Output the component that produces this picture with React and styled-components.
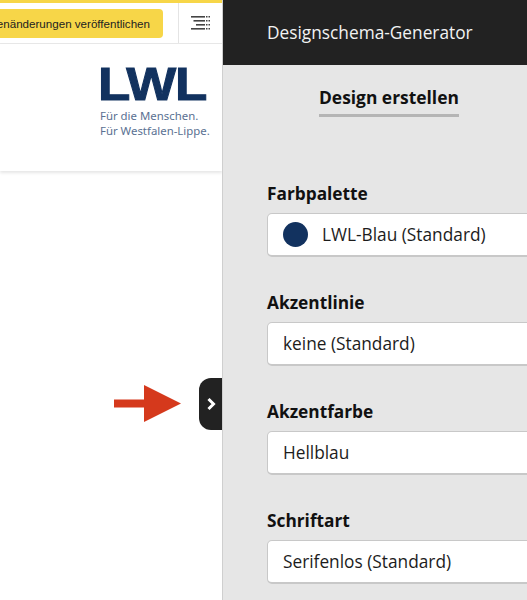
import React from "react"
import styled, { createGlobalStyle } from "styled-components"

const GlobalStyle = createGlobalStyle`
  html, body {
    margin: 0;
    padding: 0;
    background: #fff;
    overflow: hidden;
  }
`

const Page = styled.div`
  position: relative;
  display: flex;
  width: 527px;
  height: 600px;
  overflow: hidden;
  font-family: "Open Sans", sans-serif;
`

const Site = styled.div`
  flex: 0 0 222px;
  width: 222px;
  overflow: hidden;
  background: #fff;
`

const AdminStripe = styled.div`
  height: 3px;
  background: #f7d648;
`

const Toolbar = styled.div`
  display: flex;
  justify-content: flex-end;
  height: 40px;
  border-bottom: 1px solid #e8e8e8;
`

const PublishSlot = styled.div`
  display: flex;
  justify-content: flex-end;
  align-items: center;
  flex: 1;
  min-width: 0;
  padding-right: 15px;
`

const PublishButton = styled.button`
  flex: none;
  height: 29px;
  margin-top: 1px;
  padding: 0 13px;
  border: 0;
  border-radius: 4px;
  background: #f7d648;
  color: #222;
  font: 11.6px "Liberation Sans", sans-serif;
  white-space: nowrap;
`

const MenuCell = styled.div`
  display: flex;
  align-items: center;
  justify-content: center;
  width: 43px;
  border-left: 1px solid #e4e4e4;
`

const SiteHeader = styled.header`
  display: flex;
  justify-content: flex-end;
  height: 127px;
  padding-right: 13px;
  box-shadow: 0 2px 3px rgba(0, 0, 0, 0.1);
`

const Logo = styled.div`
  width: 109px;
  padding-top: 23px;
`

const LogoMark = styled.div`
  height: 34px;
  margin-left: -2px;
  color: #12325f;
  font: 700 46px/34px "Liberation Sans", sans-serif;
  letter-spacing: -1px;
  -webkit-text-stroke: 1px #12325f;
  transform: scaleX(1.15);
  transform-origin: left center;
`

const LogoClaim = styled.div`
  margin-top: 8px;
  color: #5a7192;
  font: 400 11.4px/14.5px "Noto Sans", sans-serif;
  white-space: nowrap;
`

const Panel = styled.aside`
  flex: none;
  width: 420px;
  box-sizing: border-box;
  border-left: 1px solid #cfcfcf;
  background: #e6e6e6;
`

const PanelHeader = styled.div`
  height: 65px;
  padding-left: 44px;
  background: #222;
  color: #f2f2f2;
  font-size: 17.3px;
  line-height: 66px;
`

const Tabs = styled.div`
  display: flex;
  padding: 19px 0 0 96px;
`

const Tab = styled.div`
  padding-bottom: 3px;
  border-bottom: 3px solid #b5b5b5;
  color: #111;
  font-size: 17.4px;
  font-weight: 700;
  line-height: 27px;
`

const Form = styled.div`
  display: flex;
  flex-direction: column;
  gap: 33px;
  padding: 64px 0 0 44px;
`

const Field = styled.div`
  display: flex;
  flex-direction: column;
  gap: 7px;
`

const Label = styled.label`
  color: #111;
  font-size: 17.3px;
  font-weight: 700;
  line-height: 25px;
`

const Select = styled.div`
  display: flex;
  align-items: center;
  gap: 14px;
  box-sizing: border-box;
  width: 340px;
  height: 44px;
  padding-left: 15px;
  border: 1px solid #c8c8c8;
  border-bottom-width: 2px;
  border-radius: 5px;
  background: #fff;
  color: #1c1c1c;
  font-size: 17.3px;
`

const Swatch = styled.span`
  flex: none;
  width: 25px;
  height: 25px;
  border-radius: 50%;
  background: ${props => props.color};
`

const Collapse = styled.button`
  position: absolute;
  top: 378px;
  left: 199px;
  display: flex;
  align-items: center;
  justify-content: center;
  width: 23px;
  height: 52px;
  padding: 0;
  border: 0;
  border-radius: 12px 0 0 12px;
  background: #222;
`

const Arrow = styled.svg`
  position: absolute;
  top: 385px;
  left: 114px;
`

const fields = [
  { label: "Farbpalette", value: "LWL-Blau (Standard)", swatch: "#12325f" },
  { label: "Akzentlinie", value: "keine (Standard)" },
  { label: "Akzentfarbe", value: "Hellblau" },
  { label: "Schriftart", value: "Serifenlos (Standard)" },
]

const MenuIcon = () => (
  <svg width="20" height="14" viewBox="0 0 20 14">
    <g fill="#444">
      <rect x="0" y="0" width="14" height="1.6" />
      <rect x="2.5" y="4" width="11.5" height="1.6" />
      <rect x="5" y="8" width="9" height="1.6" />
      <rect x="0" y="12" width="14" height="1.6" />
    </g>
    <g stroke="#444" strokeWidth="1.6" strokeDasharray="1.5 1">
      <path d="M15 0.8H20M15 4.8H20M15 8.8H20M15 12.8H20" />
    </g>
  </svg>
)

const App = () => (
  <Page>
    <GlobalStyle />
    <Site>
      <AdminStripe />
      <Toolbar>
        <PublishSlot>
          <PublishButton>Seitenänderungen veröffentlichen</PublishButton>
        </PublishSlot>
        <MenuCell>
          <MenuIcon />
        </MenuCell>
      </Toolbar>
      <SiteHeader>
        <Logo>
          <LogoMark>LWL</LogoMark>
          <LogoClaim>
            Für die Menschen.
            <br />
            Für Westfalen-Lippe.
          </LogoClaim>
        </Logo>
      </SiteHeader>
    </Site>
    <Panel>
      <PanelHeader>Designschema-Generator</PanelHeader>
      <Tabs>
        <Tab>Design erstellen</Tab>
      </Tabs>
      <Form>
        {fields.map(field => (
          <Field key={field.label}>
            <Label>{field.label}</Label>
            <Select>
              {field.swatch && <Swatch color={field.swatch} />}
              {field.value}
            </Select>
          </Field>
        ))}
      </Form>
    </Panel>
    <Collapse>
      <svg width="10" height="14" viewBox="0 0 10 14">
        <path d="M2.5 2L7.5 7L2.5 12" fill="none" stroke="#fff" strokeWidth="3" />
      </svg>
    </Collapse>
    <Arrow width="67" height="37" viewBox="0 0 67 37">
      <path d="M0 14.5H30V0L67 18.5L30 37V22.5H0Z" fill="#d5391c" />
    </Arrow>
  </Page>
)

export default App
